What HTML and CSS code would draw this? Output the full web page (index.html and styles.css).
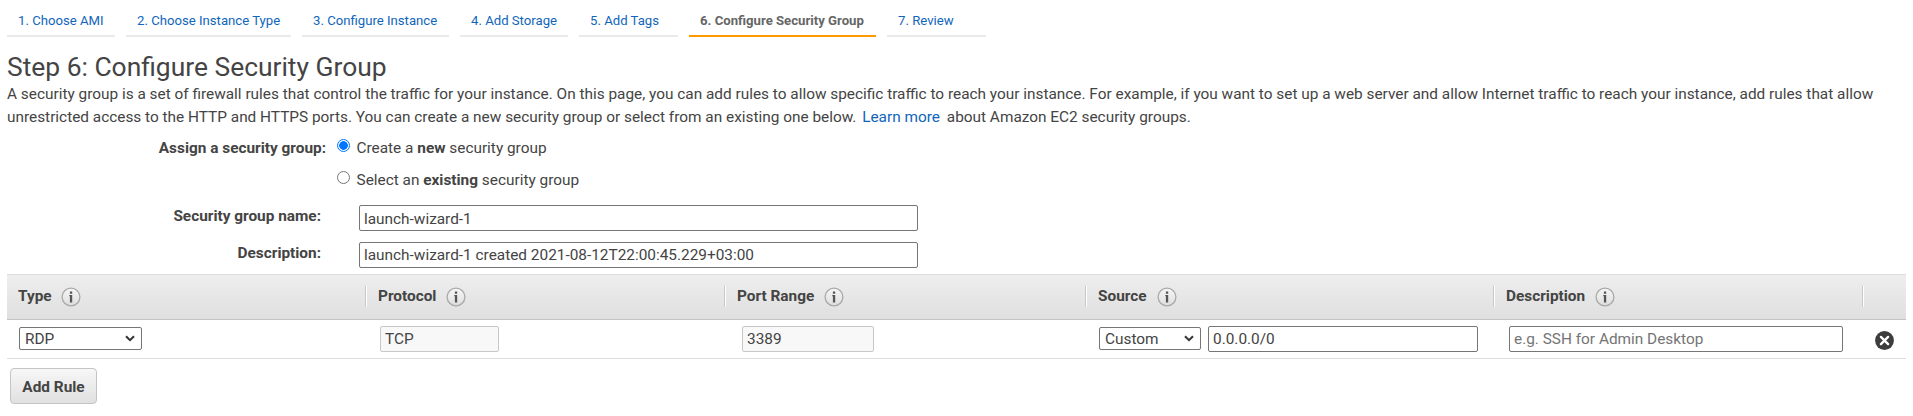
FILE: index.html
```html
<!DOCTYPE html>
<html lang="en">
<head>
<meta charset="utf-8">
<title>Step 6: Configure Security Group</title>
<link rel="stylesheet" href="styles.css">
</head>
<body>
<svg class="sprites" width="0" height="0">
  <defs>
    <linearGradient id="disc" x1="0" y1="0" x2="0" y2="1"><stop offset="0" stop-color="#f6f6f6"/><stop offset="1" stop-color="#dedede"/></linearGradient>
    <symbol id="info" viewBox="0 0 20 20">
      <circle cx="10" cy="10" r="8.9" fill="url(#disc)" stroke="#a9a9a9" stroke-width="1.3"/>
      <path d="M8.9 4.6h2.3v2.1H8.9zM8.3 8.1h2.9v7.3H8.9V9.3h-.6z" fill="#555"/>
    </symbol>
  </defs>
</svg>
<nav class="steps">
  <a class="step s1"><span>1. Choose AMI</span></a>
  <a class="step s2"><span>2. Choose Instance Type</span></a>
  <a class="step s3"><span>3. Configure Instance</span></a>
  <a class="step s4"><span>4. Add Storage</span></a>
  <a class="step s5"><span>5. Add Tags</span></a>
  <a class="step s6 active"><span>6. Configure Security Group</span></a>
  <a class="step s7"><span>7. Review</span></a>
</nav>
<main>
  <h1><span>Step 6: Configure Security Group</span></h1>
  <p class="intro"><span>A security group is a set of firewall rules that control the traffic for your instance. On this page, you can add rules to allow specific traffic to reach your instance. For example, if you want to set up a web server and allow Internet traffic to reach your instance, add rules that allow</span><br><span>unrestricted access to the HTTP and HTTPS ports. You can create a new security group or select from an existing one below. <a class="learn">Learn more</a> about Amazon EC2 security groups.</span></p>
  <div class="assign">
    <div class="assign-label"><span>Assign a security group:</span></div>
    <div class="choices">
      <label class="choice"><i class="radio on"></i><span>Create a <b>new</b> security group</span></label>
      <label class="choice"><i class="radio"></i><span>Select an <b>existing</b> security group</span></label>
    </div>
  </div>
  <div class="field name"><div class="field-label"><span>Security group name:</span></div><div class="box wide"><span>launch-wizard-1</span></div></div>
  <div class="field desc"><div class="field-label"><span>Description:</span></div><div class="box wide"><span>launch-wizard-1 created 2021-08-12T22:00:45.229+03:00</span></div></div>
  <section class="rules">
    <div class="row head">
      <div class="th"><span>Type</span><svg class="info"><use href="#info"/></svg></div>
      <div class="th"><span>Protocol</span><svg class="info"><use href="#info"/></svg></div>
      <div class="th"><span>Port Range</span><svg class="info"><use href="#info"/></svg></div>
      <div class="th"><span>Source</span><svg class="info"><use href="#info"/></svg></div>
      <div class="th"><span>Description</span><svg class="info"><use href="#info"/></svg></div>
      <div class="th"></div>
    </div>
    <div class="row body">
      <div class="td type"><div class="select type-select"><span>RDP</span><svg class="chevron" viewBox="0 0 10 7"><path d="M1 1.2l4 4 4-4" fill="none" stroke="#333" stroke-width="2"/></svg></div></div>
      <div class="td protocol"><div class="box disabled protocol-box"><span>TCP</span></div></div>
      <div class="td port"><div class="box disabled port-box"><span>3389</span></div></div>
      <div class="td source"><div class="select source-select"><span>Custom</span><svg class="chevron" viewBox="0 0 10 7"><path d="M1 1.2l4 4 4-4" fill="none" stroke="#333" stroke-width="2"/></svg></div><div class="box cidr"><span>0.0.0.0/0</span></div></div>
      <div class="td note"><div class="box hint"><span>e.g. SSH for Admin Desktop</span></div></div>
      <div class="td remove"><svg class="delete" viewBox="0 0 19 19"><circle cx="9.5" cy="9.5" r="9.4" fill="#3d3d3d"/><path d="M5.9 5.9l7.2 7.2M13.1 5.9l-7.2 7.2" stroke="#fff" stroke-width="2.3" stroke-linecap="round"/></svg></div>
    </div>
  </section>
  <button class="add"><span>Add Rule</span></button>
</main>
</body>
</html>
```
FILE: styles.css
```css
* { box-sizing: border-box; }
body { margin: 0; width: 1913px; height: 416px; overflow: hidden; background: #fff; color: #444; font: 15.39px/23px Roboto, sans-serif; padding: 0 7px; }
.sprites { display: block; }
span { white-space: nowrap; }
a { color: #1166bb; text-decoration: none; }
b { font-weight: 700; }
.steps { display: flex; gap: 11px; height: 37px; font-size: 13.16px; line-height: 20px; }
.step { height: 37px; padding: 11px 0 0 11px; border-bottom: 2px solid #eaeaea; }
.s1 { width: 108px; }
.s2 { width: 165px; }
.s3 { width: 147px; }
.s4 { width: 108px; }
.s5 { width: 99px; }
.s6 { width: 187px; }
.s7 { width: 99px; }
.active { color: #666; font-weight: 700; border-color: #ff9900; }
h1 { margin: 15px 0 0; font-size: 26.4px; line-height: 30px; font-weight: 400; height: 30px; }
.intro { margin: 0; height: 54px; padding-top: 1px; }
.learn { margin-right: 3px; margin-left: 2px; }
.assign { display: flex; height: 69px; }
.assign-label { width: 319px; text-align: right; font-weight: 700; padding-top: 1px; }
.choices { padding-left: 11px; }
.choice { display: flex; height: 32px; gap: 6.5px; padding-top: 1px; }
.radio { width: 13px; height: 13px; margin-top: 2px; border: 1px solid #767676; border-radius: 50%; background: #fff; }
.radio.on { border-color: #0075ff; background: radial-gradient(circle, #0075ff 0 4px, #fff 4.6px); }
.field { display: flex; height: 37px; }
.field-label { width: 314px; text-align: right; font-weight: 700; }
.desc { height: 32px; }
.box { height: 26px; border: 1px solid #767676; border-radius: 2px; background: #fff; padding: 1px 0 0 4px; line-height: 23px; }
.wide { width: 559px; margin-left: 38px; }
.name .wide { padding-top: 2px; }
.rules { width: 1899px; }
.row { display: grid; grid-template-columns: 358px 359px 361px 408px 369px 44px; }
.head { height: 46px; border-top: 1px solid #ddd; border-bottom: 1px solid #c4c4c4; background: linear-gradient(#eee, #dfdfdf); font-weight: 700; }
.th { display: flex; align-items: center; gap: 10px; height: 21px; margin-top: 11px; padding-left: 12px; border-left: 1px solid #c8c8c8; box-shadow: inset 1px 0 #fff; }
.th:first-child { gap: 9px; padding-left: 11px; border: 0; box-shadow: none; }
.info { width: 20px; height: 20px; }
.body { height: 39px; border-bottom: 1px solid #ddd; }
.td { display: flex; padding: 6px 0 0 14px; }
.type { padding-left: 12px; }
.protocol { padding-left: 15px; }
.port { padding-left: 18px; }
.note { padding-left: 16px; }
.remove { padding: 11px 0 0 13px; }
.select { display: flex; justify-content: space-between; align-items: center; height: 23px; margin-top: 1px; padding: 0 6px 0 5px; border: 1px solid #767676; border-radius: 2px; }
.select span { padding-top: 1px; }
.type-select { width: 123px; }
.source-select { width: 102px; margin-right: 7px; }
.chevron { width: 10px; height: 7px; }
.disabled { background: #f8f8f8; border-color: #c8c8c8; }
.protocol-box { width: 119px; }
.port-box { width: 132px; }
.cidr { width: 270px; }
.hint { width: 334px; color: #757575; }
.delete { width: 19px; height: 19px; }
.add { display: block; width: 87px; height: 36px; margin: 9px 0 0 3px; padding: 1px 0 0; border: 1px solid #c4c4c4; border-radius: 4px; background: linear-gradient(#f7f7f7, #e0e0e0); color: #444; font: 700 15.39px/34px Roboto, sans-serif; text-align: center; }
```
